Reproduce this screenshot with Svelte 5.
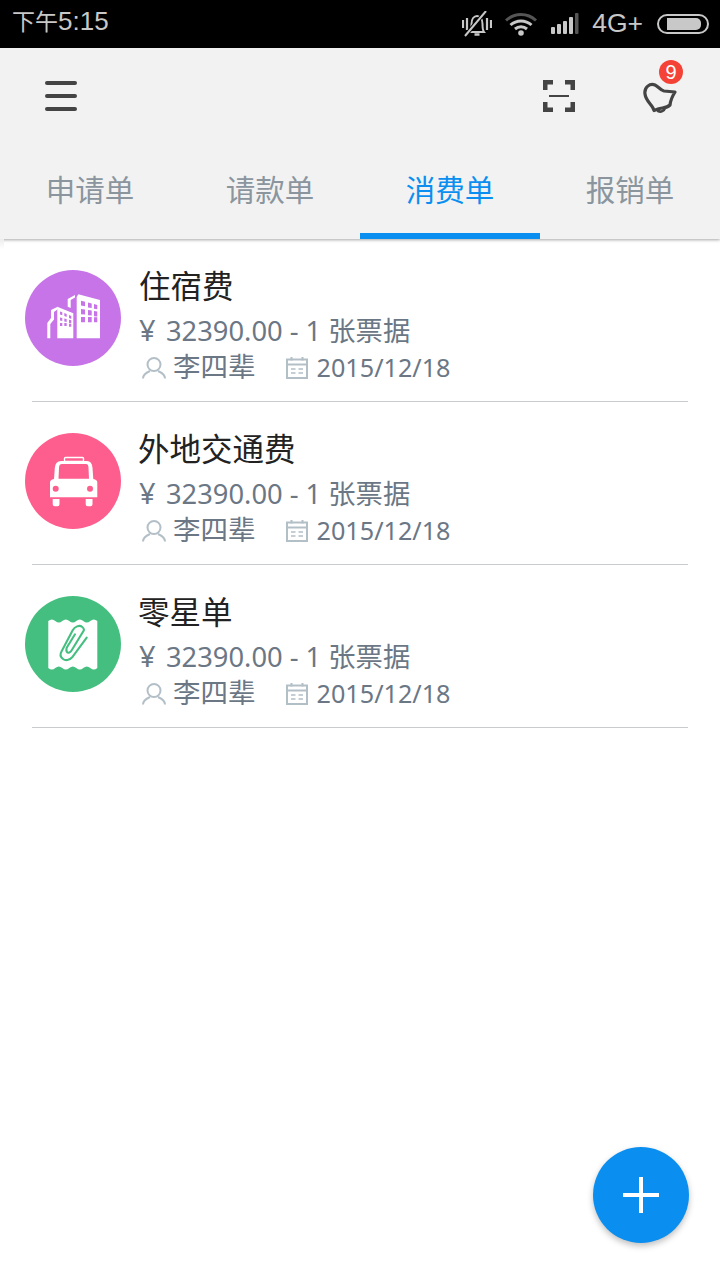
<script>
  const tabs = ['申请单', '请款单', '消费单', '报销单'];
  const items = [
    { title: '住宿费', color: '#c674e8', kind: 'hotel', indent: 'a' },
    { title: '外地交通费', color: '#fd5e8e', kind: 'taxi', indent: 'b' },
    { title: '零星单', color: '#45bf80', kind: 'receipt', indent: 'b' }
  ];
</script>

<div class="page">
  <div class="status">
    <span class="time"><span class="cjk">下午</span>5:15</span>
    <div class="status-right">
      <svg class="st-mute" width="30" height="26" viewBox="0 0 30 26" fill="none" stroke="#c8c8c8" stroke-width="2">
        <path d="M1 9v8M5 7v12M25 7v12M29 9v8" stroke-width="2.200"/>
        <path d="M8 21c1.500-2 1.500-4 1.500-8 0-5 2.500-8 5.500-8s5.500 3 5.500 8c0 4 0 6 1.500 8z"/>
        <path d="M12.500 23.500h5" stroke-width="2.500"/>
        <path d="M24 0L3 25" stroke="#000" stroke-width="4"/>
        <path d="M24 0L3 25" stroke="#c8c8c8"/>
      </svg>
      <svg class="st-wifi" width="32" height="24" viewBox="0 0 32 24" fill="none">
        <path d="M1 8.500C9.500 .5 22.500 .5 31 8.500" stroke="#555" stroke-width="3"/>
        <path d="M5.500 13C11.500 7.500 20.500 7.500 26.500 13" stroke="#c8c8c8" stroke-width="3"/>
        <path d="M10 17c3.500-3 8.500-3 12 0" stroke="#c8c8c8" stroke-width="3"/>
        <circle cx="16" cy="21" r="2.800" fill="#c8c8c8"/>
      </svg>
      <svg class="st-signal" width="28" height="24" viewBox="0 0 28 24">
        <rect x="0" y="15" width="4" height="7" rx="1" fill="#c8c8c8"/>
        <rect x="6" y="12" width="4" height="10" rx="1" fill="#c8c8c8"/>
        <rect x="12" y="9" width="4" height="13" rx="1" fill="#c8c8c8"/>
        <rect x="18" y="5" width="4" height="17" rx="1" fill="#c8c8c8"/>
        <rect x="24" y="1" width="3.500" height="21" rx="1" fill="#555"/>
      </svg>
      <span class="net">4G+</span>
      <div class="battery"><div class="level"></div></div>
    </div>
  </div>

  <header class="head">
    <div class="toolbar">
      <div class="menu"><i></i><i></i><i></i></div>
      <svg class="scan" width="32" height="32" viewBox="0 0 32 32" fill="none" stroke="#444" stroke-width="4.500">
        <path d="M2.250 10V2.250H10M22 2.250h7.750V10M29.750 22v7.750H22M10 29.750H2.250V22"/>
        <path d="M6 16h20" stroke-width="2"/>
      </svg>
      <div class="bell-wrap">
        <svg width="34" height="32" viewBox="0 0 34 32" fill="none" stroke="#444" stroke-width="3.200" stroke-linejoin="round" stroke-linecap="round">
          <path d="M2 12C1 5 7 1 12 3c3.500 1.500 5 5 9 6l11 1c-2.500 4-4.500 8-5 13-3.500 3.500-8 2.500-12 4l-4 1.500C10 23 3 20 2 12z"/>
          <path d="M15 29c3 1.500 6 0 7-3" stroke-width="2.600"/>
        </svg>
        <span class="badge">9</span>
      </div>
    </div>
    <nav class="tabs">
      {#each tabs as t, i}
        <div class="tab" class:active={i === 2}>{t}</div>
      {/each}
    </nav>
  </header>

  <main class="list">
    {#each items as it}
      <div class="row">
        <div class="avatar" style="background:{it.color}">
          {#if it.kind === 'hotel'}
            <svg width="96" height="96" viewBox="0 0 96 96" fill="#fff">
              <path d="M22.300 68.300V53l3.700-5v-8l6.700-3.300v2.600L29 42v7.500L25.300 54v14.300z"/>
              <path d="M32.300 68.300V36.700l16 6.600v25z"/>
              <path d="M42.700 36.700V29L50 25v2.600l-4.300 2.400v8z"/>
              <path d="M51.700 68.300V27l1.600-2.700L75 30v38.300z"/>
              <g fill="#c674e8">
                <path d="M35 41.500l2.300.8v3l-2.300-.8zM39.300 43l2.400.9v3l-2.400-.9zM44 45l2.300.9v3L44 48z"/>
                <path d="M35 47.500l2.300.5v3l-2.300-.4zM39.300 48.500l2.400.5v3l-2.400-.4zM44 49.800l2.300.5v3l-2.300-.4z"/>
                <path d="M35 53h2.300v3H35zM39.300 53h2.400v3h-2.400zM44 53.800h2.300v3H44z"/>
                <path d="M56 30.700l4 1v4.500l-4-.6zM63 32.500l3.700 1v4.500l-3.700-.6zM69 34l3.300.9v4.400l-3.300-.5z"/>
                <path d="M56 39l4 .5v5l-4-.3zM63 40l3.700.4v5l-3.700-.2zM69 41l3.300.4v5l-3.300-.2z"/>
                <path d="M56 47h4v5.300h-4zM63 47h3.700v5.300H63zM69 47.200h3.300v5.100H69z"/>
              </g>
            </svg>
          {:else if it.kind === 'taxi'}
            <svg width="96" height="96" viewBox="0 0 96 96" fill="#fff">
              <rect x="39.500" y="24.500" width="19" height="4" rx="1" fill="none" stroke="#fff" stroke-width="1.400"/>
              <path d="M36 28h26q5 0 5.500 7l.8 11q4 .5 4 3.500v14.800H25V49.500q0-3 4-3.500l.8-11q.7-7 6.200-7z"/>
              <path d="M37 31h24q2.500 0 2.500 4l.5 10.700H33.500L34 35q0-4 3-4z" fill="#fd5e8e"/>
              <path d="M27.700 66h6.800v5.300q0 2-2 2h-2.800q-2 0-2-2zM60.700 66h6.800v5.300q0 2-2 2h-2.800q-2 0-2-2z"/>
              <circle cx="30.700" cy="55.700" r="3" fill="#fd5e8e"/>
              <circle cx="65" cy="55.700" r="3" fill="#fd5e8e"/>
            </svg>
          {:else}
            <svg width="96" height="96" viewBox="0 0 96 96">
              <path fill="#fff" d="M23.300 25q3.500-3 7 0t7 0 7 0 7 0 7 0 7 0 7 0V72q-3.500 3-7 0t-7 0-7 0-7 0-7 0-7 0-7 0z"/>
              <path fill="none" stroke="#45bf80" stroke-width="2.100" stroke-linecap="round" stroke-linejoin="round" d="M61.700 41.700L47.700 60.700c-3.500 4-7.500 4-9.700 2.300-3-2.300-3-5-1.500-7.500L47.700 34.300c2-3.800 6.800-5.500 9.300-3.500 2.500 2 2.200 3.500 1.300 4.500L46.700 54.300c-1.500 2.400-3.500 3-4.500 2-1-1-1-2.800-.5-4.600L50 38.300"/>
            </svg>
          {/if}
        </div>
        <div class="info">
          <div class="title" class:shift={it.indent === 'b'}>{it.title}</div>
          <div class="amount">
            <span class="yen">¥</span><span>32390.00 - 1 张票据</span>
          </div>
          <div class="meta">
            <svg class="user" width="24" height="22" viewBox="0 0 24 22" fill="none" stroke="#b3bfc7" stroke-width="2">
              <ellipse cx="12" cy="7.500" rx="6.500" ry="6.500"/>
              <path d="M1 21.500c0-4 3.500-6 7-7.500M23 21.500c0-4-3.500-6-7-7.500"/>
            </svg>
            <span class="who">李四辈</span>
            <svg class="cal" width="22" height="22" viewBox="0 0 22 22" fill="none" stroke="#b3bfc7" stroke-width="2">
              <rect x="1" y="2.500" width="20" height="18.500"/>
              <path d="M1 7.500h20M5.500 0v3.500M16.500 0v3.500"/>
              <path d="M5 12h4.500M12.500 12H17M5 16h4.500M12.500 16H17" stroke-width="1.500"/>
            </svg>
            <span class="date">2015/12/18</span>
          </div>
        </div>
      </div>
    {/each}
  </main>

  <button class="fab" aria-label="添加">
    <svg width="36" height="36" viewBox="0 0 36 36" fill="#fff"><path d="M16 0h4v16h16v4H20v16h-4V20H0v-4h16z"/></svg>
  </button>
</div>

<style>
  :global(body) { margin: 0; background: #fff; }
  .page {
    position: relative;
    width: 720px;
    height: 1280px;
    overflow: hidden;
    background: #fff;
    font-family: "Noto Sans", "Noto Sans CJK SC", sans-serif;
  }
  .status {
    height: 48px;
    background: #000;
    color: #c8c8c8;
    display: flex;
    align-items: center;
    justify-content: space-between;
    padding: 0 11px 0 12px;
    box-sizing: border-box;
    font-family: "Liberation Sans", "Noto Sans CJK SC", sans-serif;
  }
  .time { font-size: 26px; line-height: 30px; padding-bottom: 5px; }
  .time .cjk { font-size: 23px; }
  .status-right { display: flex; align-items: center; }
  .st-mute { margin-right: 13px; }
  .st-wifi { margin-right: 14px; }
  .st-signal { margin-right: 13px; }
  .net { font-size: 26.500px; line-height: 30px; margin-right: 14px; padding-bottom: 2px; }
  .battery {
    width: 52px;
    height: 20px;
    border: 2px solid #c8c8c8;
    border-radius: 11px;
    box-sizing: border-box;
    padding: 2px 6px 2px 8px;
    display: flex;
  }
  .level { flex: 1; background: #c8c8c8; border-radius: 0 5px 5px 0; }
  .head {
    height: 191px;
    background: #f2f2f2;
    box-shadow: 0 1px 3px rgba(0, 0, 0, 0.35);
    position: relative;
  }
  .toolbar {
    height: 96px;
    display: flex;
    align-items: center;
    padding-left: 45px;
  }
  .menu { width: 32px; display: flex; flex-direction: column; gap: 9px; margin-right: auto; }
  .menu i { height: 4px; background: #444; border-radius: 2px; display: block; }
  .scan { margin-right: 68px; }
  .bell-wrap { position: relative; width: 34px; height: 32px; margin-right: 43px; margin-top: 4px; }
  .badge {
    position: absolute;
    top: -22px;
    left: 16px;
    width: 24px;
    height: 24px;
    border-radius: 50%;
    background: #f44336;
    color: #fff;
    font-size: 20px;
    line-height: 24px;
    text-align: center;
    font-family: "Liberation Sans", sans-serif;
  }
  .tabs { display: flex; height: 95px; }
  .tab {
    flex: 1;
    text-align: center;
    font-size: 29.500px;
    line-height: 92px;
    color: #8a959e;
    box-sizing: border-box;
    height: 95px;
  }
  .tab.active { color: #0a8ff0; border-bottom: 6px solid #0a8ff0; }
  .list { position: relative; }
  .list::before {
    content: "";
    position: absolute;
    left: 0;
    top: 0;
    width: 4px;
    height: 10px;
    background: linear-gradient(#ececec, #fff);
  }
  .row {
    height: 163px;
    box-sizing: border-box;
    display: flex;
    padding: 31px 32px 0 25px;
    position: relative;
  }
  .row::after {
    content: "";
    position: absolute;
    left: 32px;
    right: 32px;
    bottom: 0;
    height: 1px;
    background: #c9cbcd;
  }
  .avatar {
    width: 96px;
    height: 96px;
    border-radius: 50%;
    flex: none;
  }
  .avatar svg { display: block; }
  .info { margin-left: 19px; }
  .title {
    font-size: 31.500px;
    line-height: 32px;
    color: #222;
    margin-left: -1px;
  }
  .title.shift { margin-left: -2px; }
  .amount {
    font-size: 27.300px;
    line-height: 36px;
    color: #6b7785;
    margin-top: 10px;
    white-space: nowrap;
  }
  .yen { display: inline-block; width: 26px; text-align: left; margin-left: -1px; margin-right: 1px; font-size: 29px; }
  .meta {
    display: flex;
    align-items: center;
    height: 36px;
    color: #6b7785;
    white-space: nowrap;
    margin-top: 1px;
  }
  .user { margin-left: 2px; }
  .who { margin-left: 9px; font-size: 27.500px; line-height: 36px; padding-bottom: 3px; margin-left: 7px; }
  .cal { margin-left: 30px; }
  .date { margin-left: 9px; font-size: 25.200px; line-height: 36px; padding-bottom: 3px; }
  .fab {
    position: absolute;
    left: 593px;
    top: 1147px;
    width: 96px;
    height: 96px;
    border: 0;
    padding: 0;
    border-radius: 50%;
    background: #0a8ff0;
    box-shadow: 0 3px 6px rgba(0, 0, 0, 0.25);
    display: flex;
    align-items: center;
    justify-content: center;
  }
</style>
